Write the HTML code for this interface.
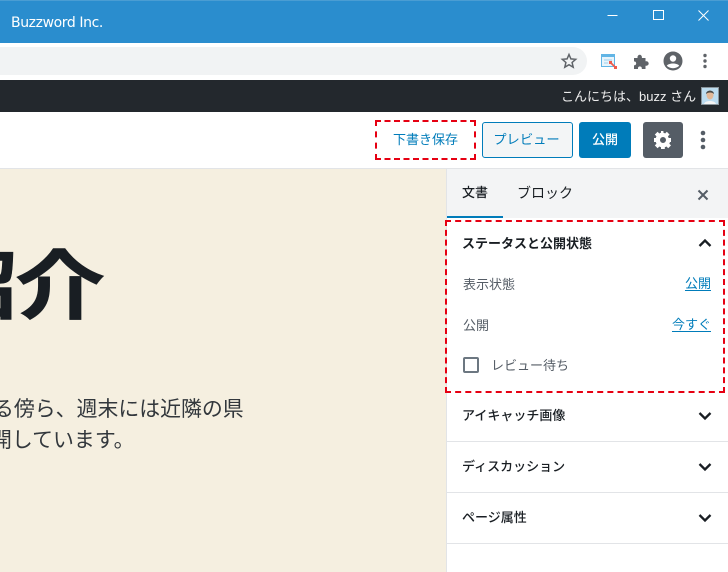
<!DOCTYPE html>
<html lang="ja">
<head>
<meta charset="utf-8">
<title>Buzzword Inc.</title>
<style>
html,body{margin:0;padding:0}
body{width:728px;height:572px;position:relative;overflow:hidden;background:#fff;font-family:"Liberation Sans","Noto Sans CJK JP",sans-serif;color:#191e23}
.a{position:absolute;white-space:nowrap}
svg{position:absolute;display:block}
.rule{position:absolute;left:447px;width:281px;height:1px;background:#e2e4e7}
.h{font-size:13px;font-weight:500;left:462px;line-height:20px;color:#191e23}
.lab{font-size:13px;line-height:20px;color:#555d66}
.lnk{font-size:13px;line-height:20px;color:#007cba;text-decoration:underline;text-underline-offset:2px}
</style>
</head>
<body>
<div class="a" style="left:0;top:0;width:728px;height:43px;background:#2a8dce"></div>
<div class="a" style="left:0;top:0;width:728px;height:1px;background:#4a9dd3"></div>
<div class="a" style="left:11px;top:14px;font-size:14px;line-height:18px;color:#fff;font-family:'DejaVu Sans',sans-serif;letter-spacing:-.4px">Buzzword Inc.</div>
<svg style="left:600px;top:0" width="128" height="30" viewBox="0 0 128 30" fill="none" stroke="#fff" stroke-width="1">
<path d="M7.500 15.500H17.500"/>
<path d="M53.500 10.500H63.500V19.500H53.500Z"/>
<path d="M98.500 10.500L108.500 20.500M108.500 10.500L98.500 20.500"/>
</svg>

<div class="a" style="left:-20px;top:47px;width:607px;height:28px;border-radius:14px;background:#f1f3f4"></div>
<svg style="left:560px;top:52px" width="18" height="18" viewBox="0 0 18 18" fill="none" stroke="#5f6368" stroke-width="1.500"><path d="M9 2.500L10.900 6.900L15.700 7.300L12.100 10.500L13.200 15.200L9 12.700L4.800 15.200L5.900 10.500L2.300 7.300L7.100 6.900Z"/></svg>
<svg style="left:600px;top:52px" width="18" height="18" viewBox="0 0 18 18">
<rect x="1.500" y="2.500" width="13" height="12" fill="#e8f4fb" stroke="#62b5e5"/>
<rect x="1" y="2" width="14" height="3" fill="#62b5e5"/>
<path d="M4 8H12M4 11H8" stroke="#9bd0ee"/>
<path d="M10 10L16 16" stroke="#ef5b4c" stroke-width="1.800"/>
<rect x="9" y="9" width="3" height="3" fill="#ef5b4c"/>
<rect x="14" y="14" width="3" height="3" fill="#ef5b4c"/>
</svg>
<svg style="left:632px;top:52px" width="18" height="18" viewBox="0 0 18 18" fill="#5f6368"><path d="M2 6H5.500V5A2.200 2.200 0 0 1 9.900 5V6H13.500V9.300H14.500A2.200 2.200 0 0 1 14.500 13.700H13.500V17H9.800V15.800A2 2 0 0 0 6 15.800V17H2V13.300H3A2.100 2.100 0 0 0 3 9.500H2Z"/></svg>
<svg style="left:663px;top:51px" width="20" height="20" viewBox="0 0 20 20"><circle cx="10" cy="10" r="9.500" fill="#5f6368"/><circle cx="10" cy="7.500" r="3.200" fill="#fff"/><path d="M3.800 14.800C5.500 11.800 14.500 11.800 16.200 14.800C13.500 18 6.500 18 3.800 14.800Z" fill="#fff"/></svg>
<svg style="left:700px;top:52px" width="10" height="18" viewBox="0 0 10 18" fill="#5f6368"><circle cx="5" cy="3.500" r="1.700"/><circle cx="5" cy="9" r="1.700"/><circle cx="5" cy="14.500" r="1.700"/></svg>

<div class="a" style="left:0;top:80px;width:728px;height:32px;background:#23282d"></div>
<div class="a" style="left:561px;top:88px;font-size:13px;line-height:18px;color:#eee">こんにちは、buzz さん</div>
<svg style="left:701px;top:87px" width="18" height="18" viewBox="0 0 18 18">
<rect width="18" height="18" fill="#a7c8dd"/><rect x=".5" y=".5" width="17" height="17" fill="#bcdcf0" stroke="#8a949b"/>
<path d="M3 17C4 13 14 13 15 17Z" fill="#f4f4f4"/>
<ellipse cx="9" cy="8" rx="3.500" ry="4.500" fill="#e2b898"/>
<path d="M5 7C5 2.500 13 2.500 13 7C11 5 7 5 5 7Z" fill="#4a4a48"/>
</svg>

<div class="a" style="left:0;top:168px;width:728px;height:1px;background:#e2e4e7"></div>

<div class="a" style="left:375px;top:120px;width:101px;height:40px;box-sizing:border-box;border:2px dashed #e60012;text-align:center;font-size:13px;line-height:36px;color:#007cba">下書き保存</div>
<div class="a" style="left:482px;top:122px;width:91px;height:36px;box-sizing:border-box;border:1px solid #007cba;border-radius:3px;background:#f3f5f6;text-align:center;font-size:13.300px;line-height:34px;color:#007cba;padding-right:2px">プレビュー</div>
<div class="a" style="left:579px;top:122px;width:52px;height:36px;border-radius:3px;background:#007cba;text-align:center;font-size:13px;line-height:36px;color:#fff;font-weight:500">公開</div>
<div class="a" style="left:643px;top:122px;width:40px;height:36px;border-radius:3px;background:#555d66"></div>
<svg style="left:653px;top:130px" width="20" height="20" viewBox="0 0 20 20"><path fill="#fff" fill-rule="evenodd" d="M18 12V8h-2.400a5.800 5.800 0 0 0-.7-1.700l1.700-1.700-2.800-2.800-1.700 1.700A5.800 5.800 0 0 0 10.400 2.800V1H8v1.800a5.800 5.800 0 0 0-1.700.7L4.600 1.800 1.800 4.600l1.700 1.700A5.800 5.800 0 0 0 2.800 8H1v4h1.800c.2.600.4 1.200.7 1.700l-1.700 1.700 2.800 2.800 1.700-1.700c.5.300 1.100.5 1.700.7V19h3.800v-1.800c.6-.2 1.200-.4 1.700-.7l1.700 1.700 2.800-2.800-1.700-1.700c.3-.5.5-1.100.7-1.700ZM10 13a3 3 0 1 1 0-6 3 3 0 0 1 0 6Z"/></svg>
<svg style="left:698px;top:128px" width="10" height="24" viewBox="0 0 10 24" fill="#555d66"><circle cx="5" cy="5" r="2.300"/><circle cx="5" cy="12" r="2.300"/><circle cx="5" cy="19" r="2.300"/></svg>

<div class="a" style="left:0;top:169px;width:446px;height:403px;background:#f5efe0;overflow:hidden">
  <div class="a" style="left:-63px;top:57px;font-size:84px;line-height:122px;font-weight:700;letter-spacing:-3px;color:#191e23;transform-origin:123px 61px;transform:scale(1.080,.900);-webkit-text-stroke:.6px #191e23">紹介</div>
  <div class="a" style="left:-7px;top:225px;font-size:20.900px;line-height:31px;color:#32373c">る傍ら、週末には近隣の県</div>
  <div class="a" style="left:-9px;top:256px;font-size:20.900px;line-height:31px;color:#32373c">開しています。</div>
</div>

<div class="a" style="left:446px;top:169px;width:1px;height:403px;background:#e2e4e7"></div>
<div class="a" style="left:447px;top:169px;width:281px;height:49px;background:#f3f4f5"></div>
<div class="a" style="left:447px;top:216px;width:56px;height:2px;background:#007cba"></div>
<div class="a" style="left:462px;top:183px;font-size:13px;font-weight:500;line-height:20px;color:#191e23">文書</div>
<div class="a" style="left:517px;top:183px;font-size:14px;line-height:20px;color:#191e23">ブロック</div>
<svg style="left:697px;top:189px" width="12" height="12" viewBox="0 0 12 12" stroke="#555d66" stroke-width="2" fill="none"><path d="M1.500 1.500L10.500 10.500M10.500 1.500L1.500 10.500"/></svg>

<div class="a" style="left:445px;top:220px;width:280px;height:173px;box-sizing:border-box;border:2px dashed #e60012"></div>
<div class="a h" style="top:234px;font-weight:700">ステータスと公開状態</div>
<svg style="left:698px;top:238px" width="14" height="10" viewBox="0 0 14 10" fill="none" stroke="#191e23" stroke-width="2.300"><path d="M1.500 8L7 2.500L12.500 8"/></svg>
<div class="a lab" style="left:463px;top:275px">表示状態</div>
<div class="a lnk" style="right:17px;top:274px">公開</div>
<div class="a lab" style="left:463px;top:316px">公開</div>
<div class="a lnk" style="right:17px;top:315px">今すぐ</div>
<div class="a" style="left:463px;top:357px;width:16px;height:16px;box-sizing:border-box;border:2px solid #6c7781;border-radius:2px;background:#fff"></div>
<div class="a lab" style="left:491px;top:356px">レビュー待ち</div>

<div class="a h" style="top:406px">アイキャッチ画像</div>
<svg style="left:698px;top:411px" width="14" height="10" viewBox="0 0 14 10" fill="none" stroke="#191e23" stroke-width="2.300"><path d="M1.500 2L7 7.500L12.500 2"/></svg>
<div class="rule" style="top:441px"></div>
<div class="a h" style="top:457px">ディスカッション</div>
<svg style="left:698px;top:462px" width="14" height="10" viewBox="0 0 14 10" fill="none" stroke="#191e23" stroke-width="2.300"><path d="M1.500 2L7 7.500L12.500 2"/></svg>
<div class="rule" style="top:492px"></div>
<div class="a h" style="top:508px">ページ属性</div>
<svg style="left:698px;top:513px" width="14" height="10" viewBox="0 0 14 10" fill="none" stroke="#191e23" stroke-width="2.300"><path d="M1.500 2L7 7.500L12.500 2"/></svg>
<div class="rule" style="top:543px"></div>
</body>
</html>
